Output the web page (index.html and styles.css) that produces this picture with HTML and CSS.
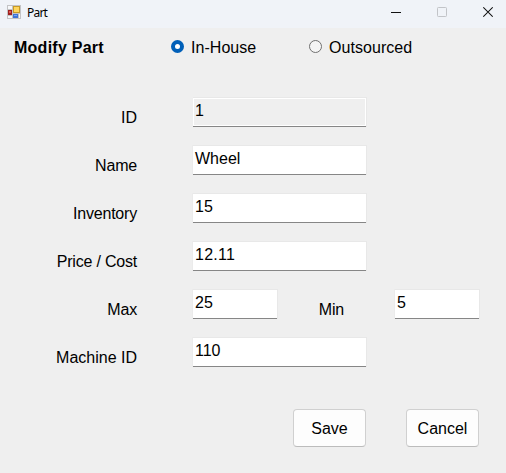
FILE: index.html
```
<!DOCTYPE html>
<html lang="en">
<head>
<meta charset="utf-8">
<title>Part</title>
<link rel="stylesheet" href="styles.css">
</head>
<body>
<div class="window">
  <header class="titlebar">
    <svg class="app-icon" width="14" height="14" viewBox="0 0 14 14" shape-rendering="crispEdges">
      <path fill="#c3c3c5" d="M0 0h14v14H0z"/>
      <path fill="#f6f7f9" d="M1 1h4v3H1zM1 11h4v2H1zM12 9h1v4h-1z"/>
      <path fill="#c79a28" d="M6 1h7v7H6z"/>
      <path fill="#ffd65c" d="M7 2h5v5H7z"/>
      <path fill="#9f2020" d="M1 5h4v5H1z"/>
      <path fill="#e05a50" d="M2 6h2v2H2z"/>
      <path fill="#3e73d6" d="M6 9h5v4H6z"/>
      <path fill="#79a5f2" d="M7 10h3v1H7z"/>
    </svg>
    <span class="title">Part</span>
    <div class="controls">
      <svg width="10" height="12" viewBox="0 0 10 12"><path fill="#111" d="M0 6h10v1H0z"/></svg>
      <svg width="10" height="12" viewBox="0 0 10 12"><rect x=".5" y="1.5" width="9" height="9" rx=".8" fill="none" stroke="#c2c4c8"/></svg>
      <svg width="10" height="12" viewBox="0 0 10 12"><path d="M.3 1.3l9.4 9.4M9.7 1.3L.3 10.7" fill="none" stroke="#111" stroke-width="1.1"/></svg>
    </div>
  </header>
  <div class="heading">
    <h1>Modify Part</h1>
    <label class="option"><span class="radio checked"></span>In-House</label>
    <label class="option second"><span class="radio"></span>Outsourced</label>
  </div>
  <main class="fields">
    <div class="row"><span class="label">ID</span><div class="input readonly">1</div></div>
    <div class="row"><span class="label tight">Name</span><div class="input">Wheel</div></div>
    <div class="row"><span class="label tight">Inventory</span><div class="input">15</div></div>
    <div class="row"><span class="label tight">Price / Cost</span><div class="input wide">12.11</div></div>
    <div class="row"><span class="label tight">Max</span><div class="input short">25</div><span class="label min">Min</span><div class="input short">5</div></div>
    <div class="row"><span class="label">Machine ID</span><div class="input">110</div></div>
  </main>
  <footer class="actions">
    <button>Save</button>
    <button>Cancel</button>
  </footer>
</div>
</body>
</html>
```
FILE: styles.css
```
* { box-sizing: border-box; }
body {
  margin: 0;
  font: 16px/18px "Liberation Sans", Arial, sans-serif;
  color: #000;
}
.window {
  width: 506px;
  height: 473px;
  background: #efefef;
  overflow: hidden;
}
.titlebar {
  height: 28px;
  padding: 0 13px 0 7px;
  display: flex;
  align-items: flex-start;
  background: #f0f3f8;
}
.app-icon { margin-top: 5px; }
.title {
  margin: 5px 0 0 6px;
  font: 12px/16px "Noto Sans", sans-serif;
  letter-spacing: -0.8px;
}
.controls {
  margin: 6px 0 0 auto;
  display: flex;
  gap: 36px;
}
.controls svg { display: block; }
.heading {
  height: 69px;
  padding: 11px 0 0 14px;
  display: flex;
  align-items: flex-start;
}
h1 {
  width: 157px;
  margin: 0;
  font-size: 16px;
  line-height: 18px;
  letter-spacing: 0.25px;
}
.option {
  width: 138px;
  display: flex;
  gap: 7px;
  letter-spacing: 0.05px;
}
.radio {
  width: 13px;
  height: 13px;
  margin-top: 1px;
  border: 1px solid #707070;
  border-radius: 50%;
  background: #f5f5f5;
}
.radio.checked {
  border: 4px solid #005fb8;
  background: #fff;
}
.fields { height: 288px; }
.row {
  height: 48px;
  display: flex;
  align-items: flex-start;
}
.label {
  width: 137px;
  margin: 12px 56px 0 0;
  text-align: right;
  white-space: nowrap;
}
.label.tight { letter-spacing: -0.2px; }
.label.min { width: 67px; margin-right: 51px; letter-spacing: -0.2px; }
.input {
  width: 173px;
  height: 30px;
  padding: 4px 0 0 2px;
  border-top: 1px solid #e8e8e8;
  border-bottom: 1px solid #868686;
  box-shadow: 1px 0 #e8e8e8, -1px 0 #ebebeb;
  background: #fff;
}
.input.wide { letter-spacing: 0.25px; }
.input.readonly {
  background: #efefef;
  box-shadow: inset 0 0 0 1px #fff, 1px 0 #e8e8e8;
}
.input.short { width: 84px; }
.actions {
  padding: 24px 27px 0 0;
  display: flex;
  justify-content: flex-end;
  gap: 40px;
}
button {
  width: 73px;
  height: 38px;
  padding: 2px 0 0;
  border: 1px solid #d0d0d0;
  border-bottom-color: #bcbcbc;
  border-radius: 4px;
  background: #fdfdfd;
  color: #000;
  font: inherit;
}
```
